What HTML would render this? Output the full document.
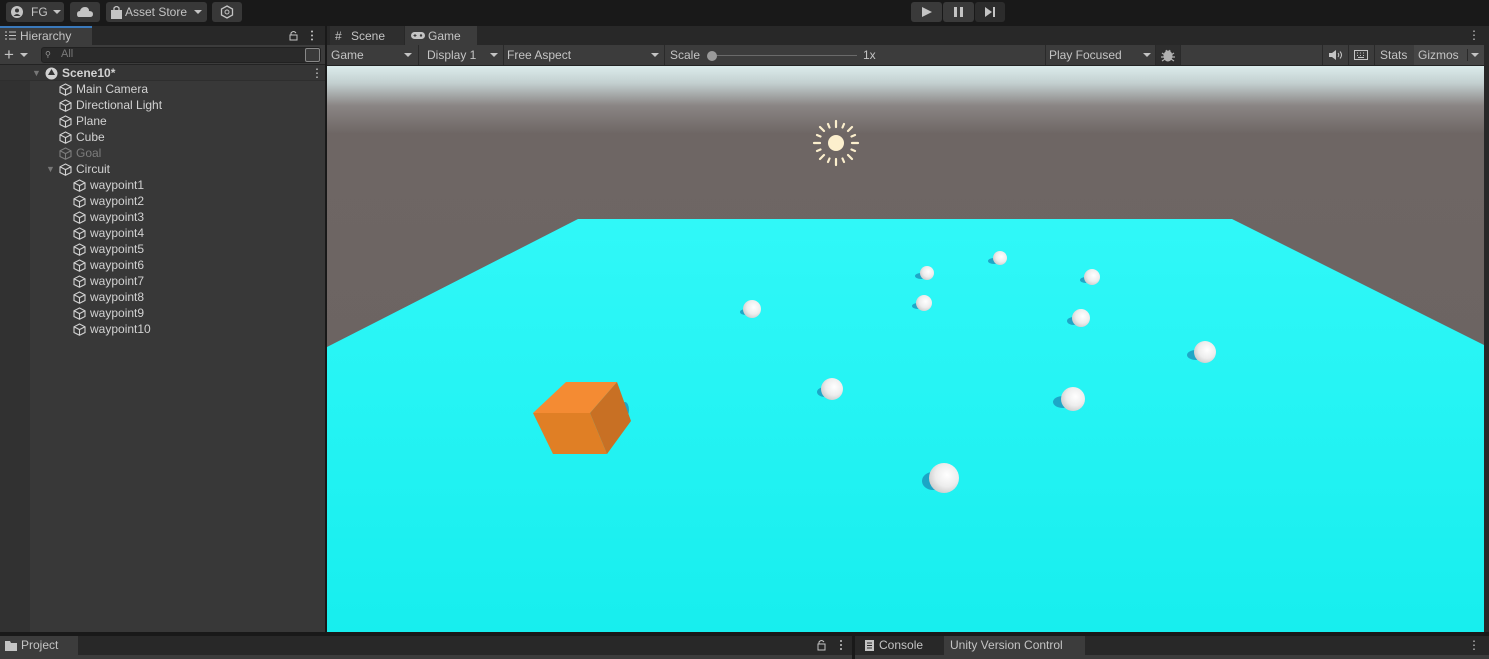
<!DOCTYPE html>
<html><head><meta charset="utf-8"><style>
*{margin:0;padding:0;box-sizing:border-box}
body{width:1489px;height:659px;overflow:hidden;background:#191919;font-family:"Liberation Sans",sans-serif;font-size:12px;color:#c4c4c4;position:relative}
.a{position:absolute}
.btn{position:absolute;background:#383838;border-radius:3px;height:20px;top:2px;color:#c4c4c4;line-height:20px;font-size:12px}
.row{position:absolute;left:0;width:325px;height:16px;line-height:16px;font-size:12px;color:#d2d2d2}
.row svg{position:absolute;top:2px}
.row span{position:absolute}
.dd{position:absolute;top:6px;width:0;height:0;border-left:4px solid transparent;border-right:4px solid transparent;border-top:4px solid #c4c4c4}
</style></head><body>
<div class="btn" style="left:6px;width:58px"><svg class="a" style="left:5px;top:4px" width="12" height="12"><circle cx="6" cy="6" r="6" fill="#c4c4c4"/><circle cx="6" cy="4.5" r="2" fill="#383838"/><path d="M2.5 10 Q6 6 9.5 10" fill="#383838"/></svg><span class="a" style="left:25px">FG</span><div class="dd" style="left:47px;top:8px"></div></div>
<div class="btn" style="left:70px;width:30px"><svg class="a" style="left:7px;top:5px" width="16" height="10"><path d="M2 10 Q0 10 0 7 Q0 4 3 4 Q4 0 8 0 Q12 0 12 4 Q16 4 16 7 Q16 10 13 10Z" fill="#c4c4c4"/></svg></div>
<div class="btn" style="left:106px;width:101px"><svg class="a" style="left:5px;top:4px" width="11" height="13"><path d="M3 4 V2 Q5.5 -1 8 2 V4" stroke="#c4c4c4" fill="none" stroke-width="1.3"/><rect x="0" y="4" width="11" height="9" fill="#c4c4c4"/></svg><span class="a" style="left:19px">Asset Store</span><div class="dd" style="left:88px;top:8px"></div></div>
<div class="btn" style="left:212px;width:30px"><svg class="a" style="left:8px;top:3px" width="14" height="14"><path d="M7 1 L12.5 4 V10 L7 13 L1.5 10 V4Z" stroke="#c4c4c4" fill="none" stroke-width="1.3"/><circle cx="7" cy="7" r="2" stroke="#c4c4c4" fill="none"/></svg></div>
<div class="btn" style="left:911px;width:31px;background:#3a3a3a"><svg class="a" style="left:11px;top:5px" width="10" height="10"><path d="M0 0 L10 5 L0 10Z" fill="#c4c4c4"/></svg></div>
<div class="btn" style="left:943px;width:31px;background:#3a3a3a"><svg class="a" style="left:11px;top:5px" width="10" height="10"><rect x="0" width="3" height="10" fill="#c4c4c4"/><rect x="6" width="3" height="10" fill="#c4c4c4"/></svg></div>
<div class="btn" style="left:975px;width:30px;background:#2c2c2c"><svg class="a" style="left:10px;top:5px" width="10" height="10"><path d="M0 0 L7 5 L0 10Z" fill="#c4c4c4"/><rect x="8" width="2" height="10" fill="#c4c4c4"/></svg></div>

<div class="a" style="left:0;top:26px;width:325px;height:19px;background:#282828"></div>
<div class="a" style="left:0;top:26px;width:92px;height:19px;background:#3c3c3c;border-top:2px solid #3a79bb"></div>
<svg class="a" style="left:5px;top:31px" width="11" height="9"><path d="M0 1h2M4 1h7M0 4.5h2M4 4.5h7M0 8h2M4 8h7" stroke="#c4c4c4"/></svg>
<div class="a" style="left:20px;top:29px;font-size:12px;color:#c4c4c4">Hierarchy</div>
<svg class="a" style="left:289px;top:30px" width="24" height="11"><path d="M2 5 V3 Q4.5 0 7 3" stroke="#c4c4c4" fill="none"/><rect x="1" y="5" width="7" height="5" stroke="#c4c4c4" fill="none"/><circle cx="23" cy="1.5" r="1" fill="#c4c4c4"/><circle cx="23" cy="5.5" r="1" fill="#c4c4c4"/><circle cx="23" cy="9.5" r="1" fill="#c4c4c4"/></svg>
<div class="a" style="left:0;top:45px;width:325px;height:20px;background:#3c3c3c;border-bottom:1px solid #232323"></div>
<div class="a" style="left:4px;top:46px;font-size:17px;color:#c4c4c4;line-height:17px">+</div>
<div class="dd" style="left:20px;top:53px"></div>
<div class="a" style="left:41px;top:47px;width:280px;height:16px;background:#2a2a2a;border:1px solid #212121;border-radius:3px"></div>
<div class="a" style="left:61px;top:48px;font-size:11px;color:#7a7a7a">All</div>
<div class="a" style="left:45px;top:50px;font-size:8px;color:#999">⚲</div>
<div class="a" style="left:305px;top:48px;width:15px;height:14px;border:1px solid #888;border-radius:2px;background:#3a3a3a"></div>
<div class="a" style="left:0;top:65px;width:30px;height:567px;background:#313131"></div>
<div class="a" style="left:30px;top:65px;width:295px;height:567px;background:#383838"></div>
<div class="a" style="left:0;top:65px;width:325px;height:16px;background:#353535;border-bottom:1px solid #2e2e2e"></div>
<div class="row" style="top:65px"><span style="left:32px;color:#777;font-size:9px">▼</span><svg style="left:45px" width="13" height="13"><circle cx="6.5" cy="6.5" r="6" fill="#d2d2d2"/><path d="M6.5 2 L10 8 L3 8Z" fill="#353535"/></svg><span style="left:62px;font-weight:bold">Scene10*</span><span style="left:311px">⋮</span></div>
<div id="tree"></div>
<script>
const cube='<svg width="13" height="13" viewBox="0 0 13 13"><path d="M6.5 1 L12 3.8 V9.5 L6.5 12.3 L1 9.5 V3.8Z M1 3.8 L6.5 6.6 L12 3.8 M6.5 6.6 V12.3" stroke="COL" fill="none" stroke-width="1.1"/></svg>';
const items=[["Main Camera",59],["Directional Light",59],["Plane",59],["Cube",59],["Goal",59,1],["Circuit",59,0,1]];
for(let i=1;i<=10;i++)items.push(["waypoint"+i,73]);
let h='';items.forEach((it,i)=>{const y=81+i*16;const c=it[2]?'#7d7d7d':'#d2d2d2';
h+=`<div class="row" style="top:${y}px">${it[3]?'<span style="left:46px;color:#777;font-size:9px">▼</span>':''}<span style="left:${it[1]}px;top:0">${cube.replace('COL',c)}</span><span style="left:${it[1]+17}px;color:${c}">${it[0]}</span></div>`});
document.getElementById('tree').innerHTML=h;
</script>

<div class="a" style="left:327px;top:26px;width:1162px;height:19px;background:#282828"></div>
<div class="a" style="left:330px;top:26px;width:74px;height:19px;background:#2e2e2e"></div>
<div class="a" style="left:405px;top:26px;width:72px;height:19px;background:#3c3c3c"></div>
<div class="a" style="left:335px;top:29px;color:#c4c4c4">#</div>
<div class="a" style="left:351px;top:29px;color:#c4c4c4">Scene</div>
<svg class="a" style="left:411px;top:32px" width="14" height="7"><rect width="14" height="7" rx="3.5" fill="#c4c4c4"/><circle cx="10" cy="3.5" r="1.2" fill="#3c3c3c"/><path d="M2.5 3.5h3M4 2v3" stroke="#3c3c3c"/></svg>
<div class="a" style="left:428px;top:29px;color:#c4c4c4">Game</div>
<div class="a" style="left:1468px;top:28px;color:#c4c4c4">⋮</div>
<div class="a" style="left:327px;top:45px;width:1157px;height:21px;background:#3c3c3c;border-bottom:1px solid #232323"></div>
<div class="a" style="left:331px;top:48px">Game</div><div class="dd" style="left:404px;top:53px"></div>
<div class="a" style="left:418px;top:45px;width:1px;height:20px;background:#2a2a2a"></div>
<div class="a" style="left:427px;top:48px">Display 1</div><div class="dd" style="left:490px;top:53px"></div>
<div class="a" style="left:503px;top:45px;width:1px;height:20px;background:#2a2a2a"></div>
<div class="a" style="left:507px;top:48px">Free Aspect</div><div class="dd" style="left:651px;top:53px"></div>
<div class="a" style="left:664px;top:45px;width:1px;height:20px;background:#2a2a2a"></div>
<div class="a" style="left:670px;top:48px">Scale</div>
<div class="a" style="left:712px;top:55px;width:145px;height:1px;background:#6a6a6a"></div>
<div class="a" style="left:707px;top:51px;width:10px;height:10px;border-radius:5px;background:#9a9a9a"></div>
<div class="a" style="left:863px;top:48px">1x</div>
<div class="a" style="left:1045px;top:45px;width:1px;height:20px;background:#2a2a2a"></div>
<div class="a" style="left:1049px;top:48px">Play Focused</div><div class="dd" style="left:1143px;top:53px"></div>
<div class="a" style="left:1155px;top:45px;width:26px;height:20px;background:#2e2e2e;border-left:1px solid #2a2a2a;border-right:1px solid #2a2a2a"></div>
<svg class="a" style="left:1161px;top:48px" width="14" height="14"><ellipse cx="7" cy="8" rx="4.5" ry="5.5" fill="#b0b0b0"/><path d="M1 5l3 2M13 5l-3 2M0 9h3M14 9h-3M1 13l3-2M13 13l-3-2M5 2l1 2M9 2l-1 2" stroke="#b0b0b0" stroke-width="1.2"/></svg>
<div class="a" style="left:1322px;top:45px;width:1px;height:20px;background:#2a2a2a"></div>
<svg class="a" style="left:1329px;top:50px" width="13" height="10"><path d="M0 3h3l4-3v10l-4-3H0Z" fill="#c4c4c4"/><path d="M9 3q1.5 2 0 4M11 1.5q3 3.5 0 7" stroke="#c4c4c4" fill="none"/></svg>
<div class="a" style="left:1348px;top:45px;width:1px;height:20px;background:#2a2a2a"></div>
<svg class="a" style="left:1354px;top:50px" width="14" height="10"><rect x=".5" y=".5" width="13" height="9" stroke="#c4c4c4" fill="none"/><path d="M3 3h1M6 3h1M9 3h1M3 5.5h1M6 5.5h1M9 5.5h1M4 7.5h6" stroke="#c4c4c4"/></svg>
<div class="a" style="left:1374px;top:45px;width:1px;height:20px;background:#2a2a2a"></div>
<div class="a" style="left:1380px;top:48px">Stats</div>
<div class="a" style="left:1414px;top:45px;width:70px;height:20px;background:#464646"></div>
<div class="a" style="left:1418px;top:48px">Gizmos</div>
<div class="a" style="left:1467px;top:49px;width:1px;height:12px;background:#2a2a2a"></div>
<div class="dd" style="left:1471px;top:53px"></div>

<svg class="a" style="left:327px;top:66px" width="1157" height="566" viewBox="327 66 1157 566">
<defs>
<linearGradient id="sky" x1="0" y1="0" x2="0" y2="1"><stop offset="0" stop-color="#dcecec"/><stop offset="0.03" stop-color="#c3d0d0"/><stop offset="0.07" stop-color="#8a8584"/><stop offset="0.12" stop-color="#6e6664"/><stop offset="1" stop-color="#6a6260"/></linearGradient>
<linearGradient id="pl" x1="0" y1="0" x2="0" y2="1"><stop offset="0" stop-color="#30f8f8"/><stop offset="1" stop-color="#17eeee"/></linearGradient>
<radialGradient id="sp" cx="0.6" cy="0.4" r="0.7"><stop offset="0" stop-color="#ffffff"/><stop offset="0.55" stop-color="#ededed"/><stop offset="1" stop-color="#c6c6c6"/></radialGradient>
</defs>
<rect x="327" y="66" width="1157" height="566" fill="url(#sky)"/>
<polygon points="578,219 1232,219 1484,345 1484,632 327,632 327,347" fill="url(#pl)"/>
<g fill="#1a86b4" opacity="0.7">
<ellipse cx="994" cy="261" rx="6" ry="3"/><ellipse cx="921" cy="276" rx="6" ry="3"/><ellipse cx="918" cy="306" rx="6" ry="3"/><ellipse cx="1086" cy="280" rx="6" ry="3"/><ellipse cx="1074" cy="321" rx="7" ry="4"/><ellipse cx="1196" cy="355" rx="9" ry="5"/><ellipse cx="1063" cy="402" rx="10" ry="6"/><ellipse cx="933" cy="481" rx="11" ry="9"/><ellipse cx="746" cy="312" rx="6" ry="3"/><ellipse cx="825" cy="392" rx="8" ry="5"/><ellipse cx="625" cy="410" rx="4" ry="8"/>
</g>
<g fill="url(#sp)">
<circle cx="1000" cy="258" r="7"/><circle cx="927" cy="273" r="7"/><circle cx="924" cy="303" r="8"/><circle cx="1092" cy="277" r="8"/><circle cx="1081" cy="318" r="9"/><circle cx="1205" cy="352" r="11"/><circle cx="1073" cy="399" r="12"/><circle cx="944" cy="478" r="15"/><circle cx="752" cy="309" r="9"/><circle cx="832" cy="389" r="11"/>
</g>
<polygon points="533,413 566,382 617,382 590,413" fill="#f48b33"/>
<polygon points="533,413 590,413 607,454 553,454" fill="#e07f25"/>
<polygon points="590,413 617,382 631,421 607,454" fill="#c87024"/>
<g stroke="#fcefcd" stroke-width="2.2" stroke-linecap="round">
<circle cx="836" cy="143" r="8" fill="#fcefcd" stroke="none"/>
<path d="M836 121v6M836 159v6M814 143h6M852 143h6M820 127l4 4M852 127l-4 4M820 159l4-4M852 159l-4-4M828 124l1.5 3.5M844 124l-1.5 3.5M828 162l1.5-3.5M844 162l-1.5-3.5M817 135l3.5 1.5M855 135l-3.5 1.5M817 151l3.5-1.5M855 151l-3.5-1.5"/>
</g>
</svg>
<div class="a" style="left:325px;top:26px;width:2px;height:610px;background:#191919"></div>
<div class="a" style="left:1484px;top:45px;width:5px;height:590px;background:#282828"></div>

<div class="a" style="left:0;top:632px;width:1489px;height:4px;background:#191919"></div>
<div class="a" style="left:0;top:636px;width:852px;height:19px;background:#282828"></div>
<div class="a" style="left:0;top:636px;width:78px;height:19px;background:#3c3c3c"></div>
<svg class="a" style="left:5px;top:641px" width="12" height="10"><path d="M0 0h5l1 2h6v8H0Z" fill="#c4c4c4"/></svg>
<div class="a" style="left:21px;top:638px;color:#c4c4c4">Project</div>
<svg class="a" style="left:817px;top:639px" width="30" height="12"><path d="M2 5V3Q4.5 0 7 3" stroke="#c4c4c4" fill="none"/><rect x="1" y="5" width="7" height="6" stroke="#c4c4c4" fill="none"/><circle cx="24" cy="2" r="1" fill="#c4c4c4"/><circle cx="24" cy="6" r="1" fill="#c4c4c4"/><circle cx="24" cy="10" r="1" fill="#c4c4c4"/></svg>
<div class="a" style="left:852px;top:636px;width:3px;height:23px;background:#191919"></div>
<div class="a" style="left:855px;top:636px;width:634px;height:19px;background:#282828"></div>
<div class="a" style="left:944px;top:636px;width:141px;height:19px;background:#3c3c3c"></div>
<svg class="a" style="left:865px;top:640px" width="9" height="11"><rect width="9" height="11" fill="#c4c4c4"/><path d="M2 3h5M2 5.5h5M2 8h5" stroke="#282828"/></svg>
<div class="a" style="left:879px;top:638px;color:#c4c4c4">Console</div>
<div class="a" style="left:950px;top:638px;color:#c4c4c4">Unity Version Control</div>
<div class="a" style="left:1468px;top:638px;color:#c4c4c4">⋮</div>
<div class="a" style="left:0;top:655px;width:852px;height:4px;background:#3c3c3c"></div>
<div class="a" style="left:855px;top:655px;width:634px;height:4px;background:#3c3c3c"></div>
</body></html>
